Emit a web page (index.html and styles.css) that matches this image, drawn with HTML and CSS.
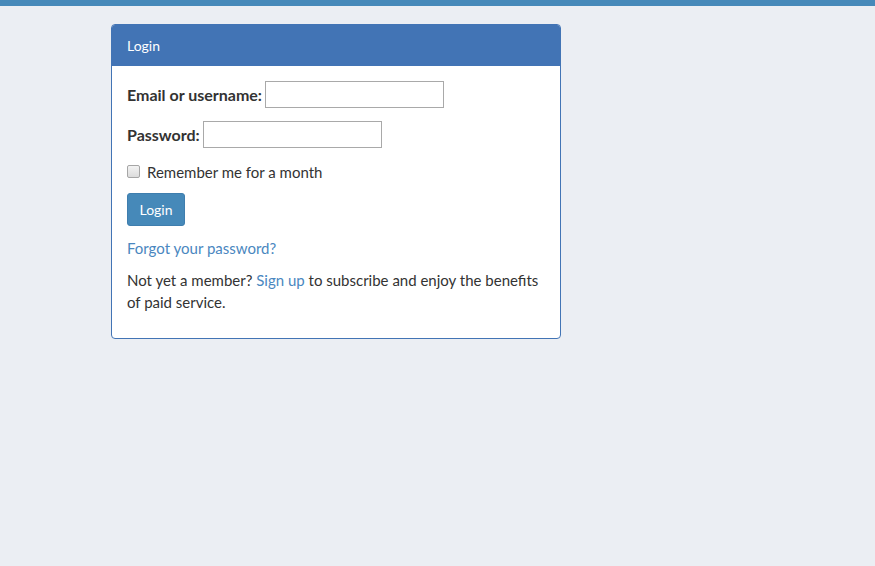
FILE: index.html
```html
<!DOCTYPE html>
<html>
<head>
<meta charset="utf-8">
<link rel="stylesheet" href="styles.css">
</head>
<body>
<div class="topbar"></div>
<div class="panel">
  <div class="panel-header">Login</div>
  <div class="panel-body">
    <div class="field"><label class="lbl">Email or username:</label><input class="txt" type="text"></div>
    <div class="field"><label class="lbl">Password:</label><input class="txt" type="password"></div>
    <div class="check"><input type="checkbox" class="cb"><span>Remember me for a month</span></div>
    <button class="btn">Login</button>
    <div class="line"><a href="#" class="link">Forgot your password?</a></div>
    <p class="para">Not yet a member? <a href="#" class="link">Sign up</a> to subscribe and enjoy the benefits of paid service.</p>
  </div>
</div>
</body>
</html>
```
FILE: styles.css
```css
html, body { margin: 0; padding: 0; }
body {
  background: #ebeef3;
  font-family: "Lato", "Liberation Sans", sans-serif;
  font-size: 15px;
  color: #333;
  height: 566px;
}
.topbar { height: 6px; background: #4689b9; }
.panel {
  box-sizing: border-box;
  width: 450px;
  margin: 18px 0 0 111px;
  border: 1px solid #4274b5;
  border-radius: 4px;
  background: #fff;
  overflow: hidden;
}
.panel-header {
  background: #4274b5;
  color: #fff;
  font-size: 14px;
  height: 41px;
  line-height: 41px;
  padding: 0 15px;
}
.panel-body { padding: 15px 15px 15px 15px; }
.field { display: flex; align-items: center; height: 27px; margin-bottom: 13px; }
.lbl { font-weight: bold; font-size: 16px; margin-right: 3px; }
.txt {
  box-sizing: border-box;
  width: 179px; height: 27px;
  border: 1px solid #a9a9a9;
  margin: 0; padding: 2px 4px;
  font: inherit;
}
.check { display: flex; align-items: center; height: 22px; margin-bottom: 10px; }
.cb {
  -webkit-appearance: none;
  appearance: none;
  box-sizing: border-box;
  margin: -2px 7px 0 0;
  width: 13px; height: 13px;
  border: 1px solid #a6a6a6;
  border-radius: 2px;
  background: linear-gradient(#f3f3f3, #dcdcdc);
}
.btn {
  display: block;
  height: 33px; width: 58px;
  background: #4689b9;
  color: #fff;
  border: 1px solid #3f7eae;
  border-radius: 3px;
  font: inherit; font-size: 14px;
  padding: 0;
  margin-bottom: 11px;
}
.line { line-height: 22px; margin-bottom: 10px; }
.link { color: #4a87c0; text-decoration: none; }
.para { margin: 0 -8px 10px 0; line-height: 22px; }
```
